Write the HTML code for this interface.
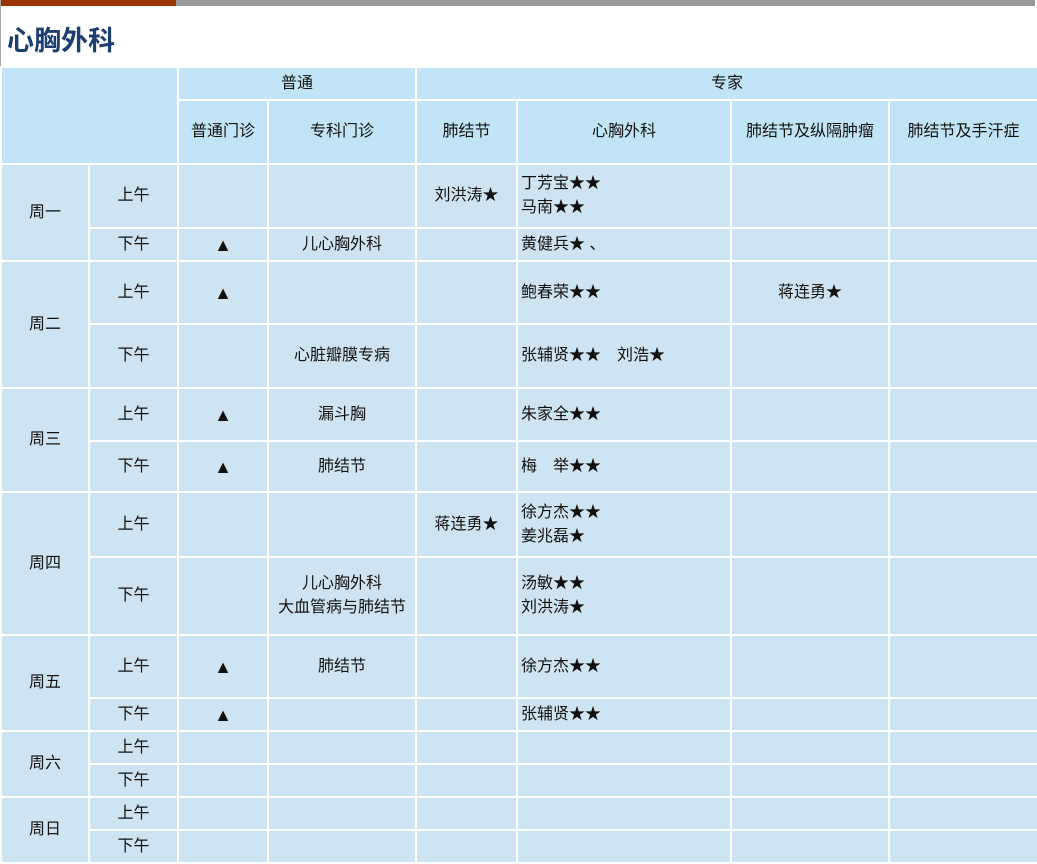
<!DOCTYPE html>
<html><head><meta charset="utf-8"><style>
body{margin:0;background:#fff;width:1037px;height:863px;overflow:hidden;position:relative;font-family:"Liberation Sans","Noto Sans CJK SC",sans-serif;}
.bar1{position:absolute;left:1px;top:0;width:175px;height:6px;background:#993300}
.bar2{position:absolute;left:176px;top:0;width:859px;height:6px;background:#999}
.lb{position:absolute;left:0;top:0;width:1px;height:67px;background:#aaa}
h1{position:absolute;left:7px;top:19px;margin:0;font-size:27px;color:#1b3f6e;font-weight:bold;letter-spacing:0px}
table{position:absolute;left:0;top:66px;border-collapse:collapse;table-layout:fixed;width:1037px}
td{border:2px solid #fff;background:#cfe4f2;font-size:16px;color:#111;text-align:center;padding:0;line-height:24px}
tr.h td{background:#c1e5f7}
td.l{text-align:left;padding-left:3px}
.t{font-size:18px}
</style></head><body>
<div class="bar1"></div><div class="bar2"></div><div class="lb"></div>
<h1>心胸外科</h1>
<table>
<colgroup><col style="width:88px"><col style="width:89px"><col style="width:90px"><col style="width:148px"><col style="width:101px"><col style="width:214px"><col style="width:158px"><col style="width:149px"></colgroup>
<tr class="h" style="height:33px"><td colspan="2" rowspan="2"></td><td colspan="2">普通</td><td colspan="4">专家</td></tr>
<tr class="h" style="height:64px"><td>普通门诊</td><td>专科门诊</td><td>肺结节</td><td>心胸外科</td><td>肺结节及纵隔肿瘤</td><td>肺结节及手汗症</td></tr>
<tr style="height:64px"><td rowspan="2">周一</td><td>上午</td><td></td><td></td><td>刘洪涛★</td><td class="l">丁芳宝★★<br>马南★★</td><td></td><td></td></tr>
<tr style="height:33px"><td>下午</td><td class="t">▲</td><td>儿心胸外科</td><td></td><td class="l">黄健兵★ 、</td><td></td><td></td></tr>
<tr style="height:63px"><td rowspan="2">周二</td><td>上午</td><td class="t">▲</td><td></td><td></td><td class="l">鲍春荣★★</td><td>蒋连勇★</td><td></td></tr>
<tr style="height:64px"><td>下午</td><td></td><td>心脏瓣膜专病</td><td></td><td class="l">张辅贤★★　刘浩★</td><td></td><td></td></tr>
<tr style="height:53px"><td rowspan="2">周三</td><td>上午</td><td class="t">▲</td><td>漏斗胸</td><td></td><td class="l">朱家全★★</td><td></td><td></td></tr>
<tr style="height:51px"><td>下午</td><td class="t">▲</td><td>肺结节</td><td></td><td class="l">梅　举★★</td><td></td><td></td></tr>
<tr style="height:65px"><td rowspan="2">周四</td><td>上午</td><td></td><td></td><td>蒋连勇★</td><td class="l">徐方杰★★<br>姜兆磊★</td><td></td><td></td></tr>
<tr style="height:78px"><td>下午</td><td></td><td>儿心胸外科<br>大血管病与肺结节</td><td></td><td class="l">汤敏★★<br>刘洪涛★</td><td></td><td></td></tr>
<tr style="height:63px"><td rowspan="2">周五</td><td>上午</td><td class="t">▲</td><td>肺结节</td><td></td><td class="l">徐方杰★★</td><td></td><td></td></tr>
<tr style="height:33px"><td>下午</td><td class="t">▲</td><td></td><td></td><td class="l">张辅贤★★</td><td></td><td></td></tr>
<tr style="height:33px"><td rowspan="2">周六</td><td>上午</td><td></td><td></td><td></td><td></td><td></td><td></td></tr>
<tr style="height:33px"><td>下午</td><td></td><td></td><td></td><td></td><td></td><td></td></tr>
<tr style="height:33px"><td rowspan="2">周日</td><td>上午</td><td></td><td></td><td></td><td></td><td></td><td></td></tr>
<tr style="height:33px"><td>下午</td><td></td><td></td><td></td><td></td><td></td><td></td></tr>
</table>
</body></html>
